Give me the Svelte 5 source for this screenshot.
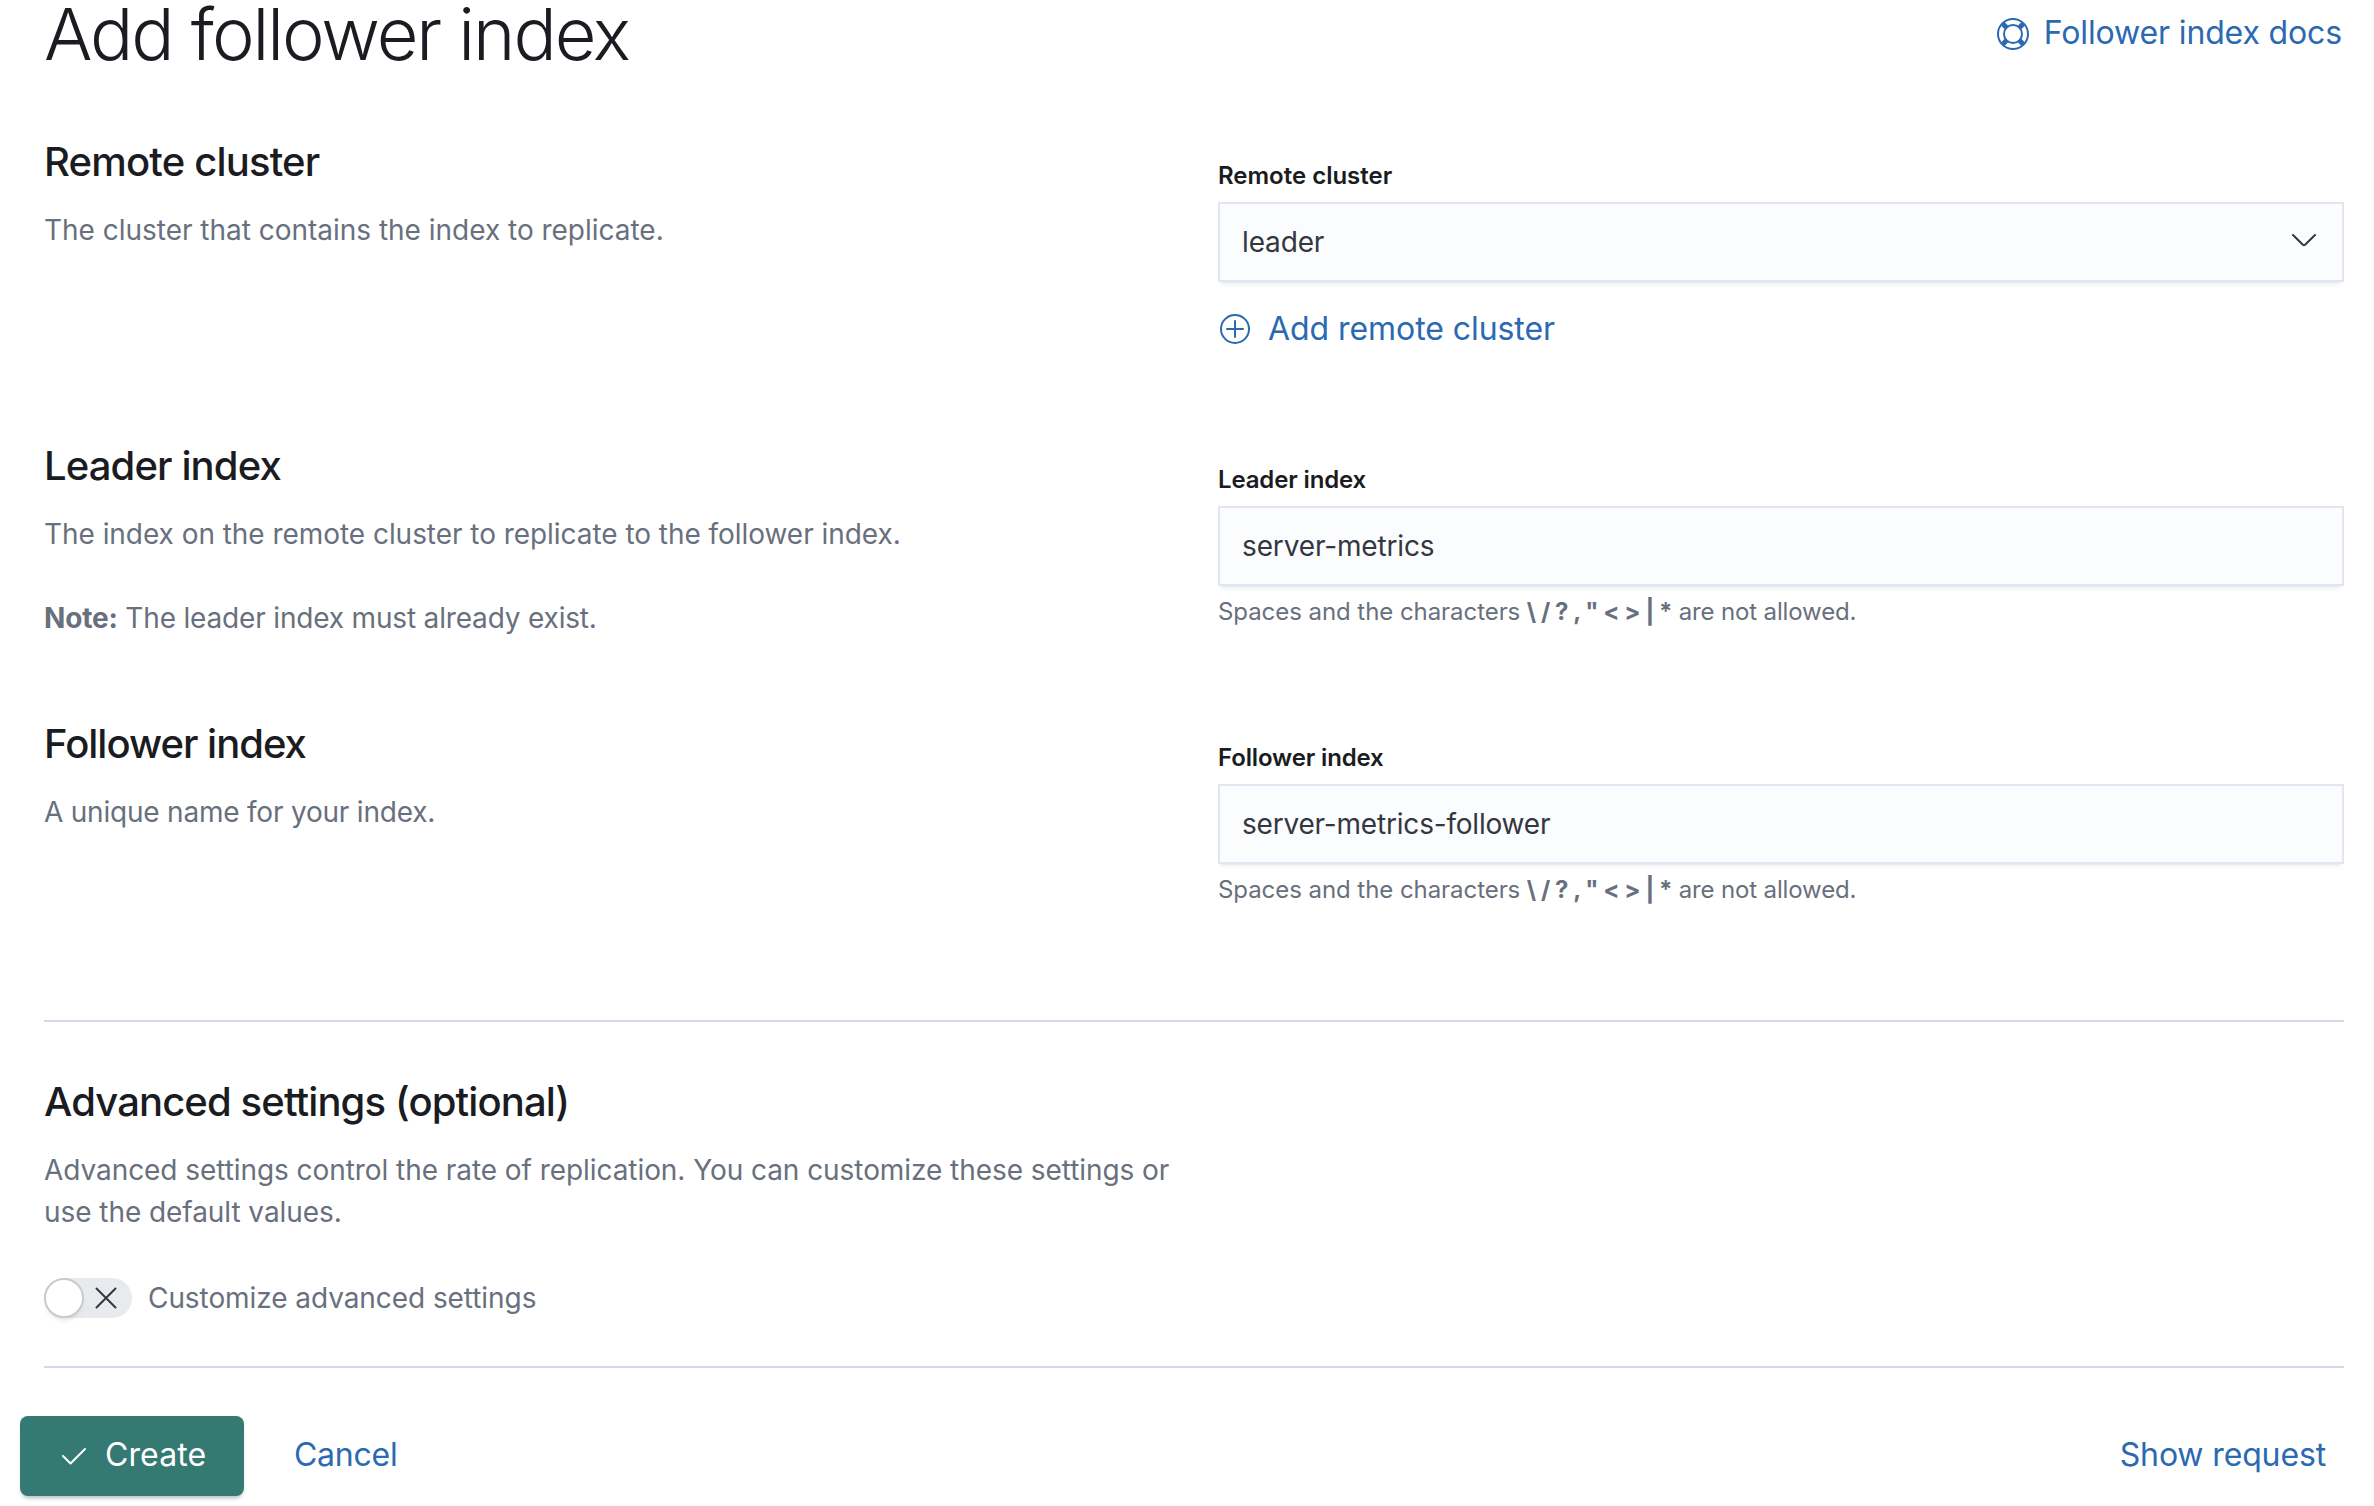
<script>
  let customize = $state(false);
  let leaderIndex = $state('server-metrics');
  let followerIndex = $state('server-metrics-follower');
  const forbidden = '\\ / ? , " < > | *';
</script>

{#snippet help()}
  <p class="help"><span class="lead">Spaces and the characters</span> <strong>{forbidden}</strong> are not allowed.</p>
{/snippet}

<main>
  <header>
    <h1>Add follower index</h1>
    <a class="link docs" href="#docs">
      <svg width="32" height="32" viewBox="0 0 32 32" fill="none" stroke="currentColor">
        <circle cx="16" cy="16" r="15" stroke-width="2" />
        <circle cx="16" cy="16" r="9" stroke-width="2" />
        <path stroke-width="5" d="M5.8 5.8l3.6 3.6M26.2 5.8l-3.6 3.6M5.8 26.2l3.6-3.6M26.2 26.2l-3.6-3.6" />
      </svg>
      <span>Follower index docs</span>
    </a>
  </header>

  <section class="row remote">
    <div>
      <h2>Remote cluster</h2>
      <p class="desc">The cluster that contains the index to replicate.</p>
    </div>
    <div class="form">
      <span class="label">Remote cluster</span>
      <button class="field select" type="button">
        <span>leader</span>
        <svg width="24" height="13" viewBox="0 0 24 13" fill="none" stroke="currentColor" stroke-width="2" stroke-linecap="round">
          <path d="M1 1l9.9 9.7q1.1 1 2.2 0L23 1" />
        </svg>
      </button>
      <a class="link add" href="#add">
        <svg width="30" height="30" viewBox="0 0 30 30" fill="none" stroke="currentColor" stroke-width="2">
          <circle cx="15" cy="15" r="14" />
          <path stroke-linecap="round" d="M7 15h16M15 7v16" />
        </svg>
        <span>Add remote cluster</span>
      </a>
    </div>
  </section>

  <section class="row leader">
    <div>
      <h2>Leader index</h2>
      <p class="desc">The index on the remote cluster to replicate to the follower index.</p>
      <p class="desc note"><strong>Note:</strong> The leader index must already exist.</p>
    </div>
    <div class="form">
      <label class="label" for="leader">Leader index</label>
      <input class="field" id="leader" bind:value={leaderIndex} spellcheck="false" />
      {@render help()}
    </div>
  </section>

  <section class="row follower">
    <div>
      <h2>Follower index</h2>
      <p class="desc">A unique name for your index.</p>
    </div>
    <div class="form">
      <label class="label" for="follower">Follower index</label>
      <input class="field" id="follower" bind:value={followerIndex} spellcheck="false" />
      {@render help()}
    </div>
  </section>

  <section class="row advanced">
    <div>
      <h2>Advanced settings (optional)</h2>
      <p class="desc">Advanced settings control the rate of replication. You can customize these settings or use the default values.</p>
      <button class="switch" class:on={customize} type="button" role="switch" aria-checked={customize} onclick={() => (customize = !customize)}>
        <span class="track">
          <span class="thumb"></span>
          <svg width="22" height="22" viewBox="0 0 22 22" fill="none" stroke="currentColor" stroke-width="2" stroke-linecap="round">
            <path d="M1.5 1.5l19 19M20.5 1.5l-19 19" />
          </svg>
        </span>
        <span>Customize advanced settings</span>
      </button>
    </div>
  </section>

  <footer>
    <button class="create" type="button">
      <svg width="26" height="18" viewBox="0 0 26 18" fill="none" stroke="currentColor" stroke-width="2" stroke-linecap="round" stroke-linejoin="round">
        <path d="M2 9l7.5 7.5L24 2" />
      </svg>
      <span>Create</span>
    </button>
    <a class="link cancel" href="#cancel">Cancel</a>
    <a class="link request" href="#request">Show request</a>
  </footer>
</main>

<style>
  :global(body) {
    margin: 0;
    background: #fff;
  }
  main {
    box-sizing: border-box;
    height: 1506px;
    padding: 0 30px 0 44px;
    overflow: hidden;
    font-family: Inter, sans-serif;
    font-size: 28px;
    line-height: 42px;
    letter-spacing: -0.005em;
    color: #343741;
  }
  h1, h2, p {
    margin: 0;
  }
  button, input {
    font: inherit;
    letter-spacing: inherit;
    color: inherit;
    border: 0;
    margin: 0;
    text-align: left;
  }
  svg {
    display: block;
    flex: none;
  }
  header {
    display: flex;
    justify-content: space-between;
    align-items: flex-start;
    height: 132px;
  }
  h1 {
    font-size: 72px;
    line-height: 68px;
    font-weight: 300;
    letter-spacing: -0.0285em;
    color: #1a1c21;
  }
  .link {
    font-size: 32px;
    color: #2b69b1;
    text-decoration: none;
    white-space: nowrap;
  }
  .docs {
    display: flex;
    gap: 15px;
    margin-right: 2px;
    line-height: 65px;
  }
  .docs svg {
    margin-top: 18px;
  }
  .row {
    box-sizing: border-box;
    display: grid;
    grid-template-columns: 1126px 1126px;
    column-gap: 48px;
  }
  .remote { height: 304px; }
  .leader { height: 278px; }
  .follower {
    height: 308px;
    border-bottom: 2px solid #d3dae6;
  }
  .advanced {
    height: 346px;
    padding-top: 50px;
    border-bottom: 2px solid #d3dae6;
  }
  h2 {
    font-size: 40px;
    line-height: 60px;
    font-weight: 500;
    letter-spacing: -0.022em;
    color: #1a1c21;
  }
  .remote h2 { letter-spacing: -0.0205em; }
  .follower h2 { letter-spacing: -0.025em; }
  .desc {
    margin-top: 17px;
    letter-spacing: -0.0022em;
    color: #69707d;
  }
  .remote .desc { letter-spacing: -0.0006em; }
  .leader .desc { letter-spacing: -0.0017em; }
  .follower .desc { letter-spacing: -0.0075em; }
  .leader .note {
    margin-top: 42px;
    letter-spacing: -0.0062em;
  }
  strong { font-weight: 700; }
  .form {
    display: flex;
    flex-direction: column;
    padding-top: 26px;
  }
  .label {
    margin-bottom: 8px;
    font-size: 24px;
    line-height: 36px;
    font-weight: 600;
    color: #1a1c21;
  }
  .remote .label { letter-spacing: -0.0005em; }
  .field {
    box-sizing: border-box;
    width: 100%;
    height: 80px;
    padding: 0 24px;
    border-radius: 0;
    outline: 0;
    background: #fbfcfd;
    box-shadow:
      0 2px 2px -2px rgba(152, 162, 179, 0.2),
      0 6px 4px -4px rgba(152, 162, 179, 0.2),
      inset 0 0 0 2px rgba(19, 34, 149, 0.1);
  }
  .follower .field { letter-spacing: -0.007em; }
  .select {
    display: flex;
    align-items: center;
    justify-content: space-between;
    padding-right: 28px;
  }
  .select svg { margin-bottom: 3px; }
  .add {
    display: flex;
    gap: 18px;
    margin-top: 22px;
    padding-left: 2px;
    line-height: 49px;
    letter-spacing: -0.002em;
  }
  .add svg { margin-top: 10px; }
  .help {
    margin-top: 8px;
    font-size: 24px;
    line-height: 36px;
    color: #69707d;
  }
  .lead { letter-spacing: -0.0025em; }
  .help strong { letter-spacing: -0.019em; }
  .switch {
    display: flex;
    align-items: center;
    gap: 16px;
    height: 40px;
    margin-top: 45px;
    padding: 0;
    background: none;
    letter-spacing: -0.0025em;
    color: #69707d;
  }
  .track {
    box-sizing: border-box;
    display: flex;
    align-items: center;
    justify-content: space-between;
    width: 88px;
    height: 40px;
    padding-right: 15px;
    border-radius: 20px;
    background: #e9eaee;
    color: #343741;
  }
  .thumb {
    box-sizing: border-box;
    width: 40px;
    height: 40px;
    border: 2px solid #c9cbcd;
    border-radius: 50%;
    background: #fff;
    box-shadow: 0 4px 4px -2px rgba(152, 162, 179, 0.3);
  }
  .on .track {
    flex-direction: row-reverse;
    padding: 0 0 0 15px;
    background: #006bb4;
    color: #fff;
  }
  footer {
    display: flex;
    align-items: center;
    height: 80px;
    margin: 48px 0 0 -24px;
    line-height: 80px;
  }
  .create {
    box-sizing: border-box;
    display: flex;
    align-items: center;
    gap: 18px;
    width: 224px;
    height: 80px;
    margin-right: 50px;
    padding: 0 0 0 41px;
    border-radius: 8px;
    background: #357a72;
    box-shadow: 0 4px 4px -2px rgba(53, 90, 85, 0.4);
    font-size: 32px;
    line-height: 78px;
    letter-spacing: 0.003em;
    color: #fff;
  }
  .create span, .cancel, .request {
    height: 80px;
    line-height: 78px;
  }
  .cancel { letter-spacing: -0.008em; }
  .request {
    margin-left: auto;
    margin-right: 18px;
  }
</style>
